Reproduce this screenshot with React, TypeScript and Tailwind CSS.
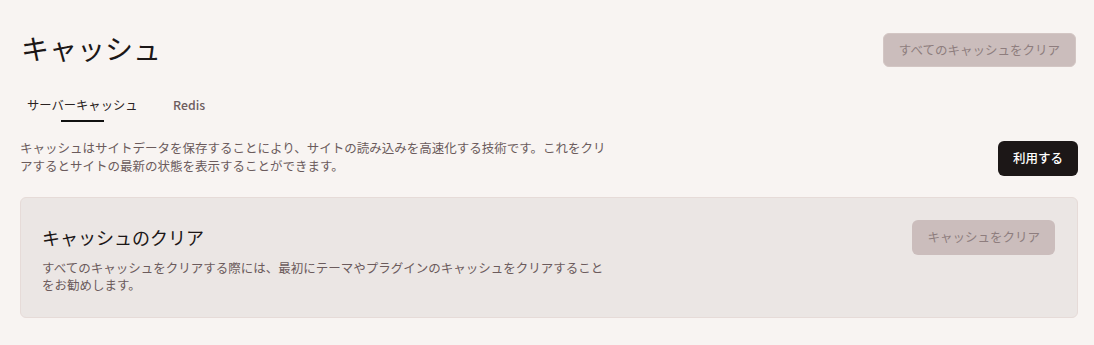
const font = { fontFamily: '"Noto Sans CJK JP", "Noto Sans", sans-serif' };

const TABS = ["サーバーキャッシュ", "Redis"];

export default function App() {
  const active = 0;
  return (
    <div
      className="w-[1094px] h-[345px] bg-[#f8f4f2] pl-5 pr-[16px] overflow-hidden"
      style={font}
    >
      {/* header */}
      <div className="flex items-start justify-between pt-[30px]">
        <h1 className="ml-[1px] text-[28px] leading-[36px] text-[#1c1717]">
          キャッシュ
        </h1>
        <button
          disabled
          className="mt-[3px] mr-[2px] h-[34px] px-[15px] rounded-md bg-[#cbbdbc] border border-[#d3c6c4] text-[12.5px] text-[#8e7d7e]"
        >
          すべてのキャッシュをクリア
        </button>
      </div>

      {/* tabs */}
      <div className="mt-[28px] flex gap-[30px] pl-[7px]">
        {TABS.map((t, i) => (
          <div key={t} className="flex flex-col items-center">
            <span
              className={`text-[12.3px] leading-[20px] ${
                i === active ? "text-[#2a2222]" : "text-[#6d5d5e] font-medium"
              }`}
            >
              {t}
            </span>
            <span
              className={`mt-[5px] h-[2px] w-[43px] ${
                i === active ? "bg-[#111]" : "bg-transparent"
              }`}
            />
          </div>
        ))}
      </div>

      {/* description */}
      <div className="mt-[17px] flex items-start justify-between">
        <p className="max-w-[595px] text-[12.5px] leading-[18px] text-[#6b5b5c]">
          キャッシュはサイトデータを保存することにより、サイトの読み込みを高速化する技術です。これをクリアするとサイトの最新の状態を表示することができます。
        </p>
        <button className="mt-[2px] h-[35px] px-[15px] rounded-md bg-[#1c1717] text-white text-[12.5px] font-medium">
          利用する
        </button>
      </div>

      {/* clear card */}
      <div className="mt-[21px] flex items-start justify-between rounded-md border border-[#e6dbd8] bg-[#ebe6e4] pt-[22px] pl-[21px] pr-[22px] pb-[24px]">
        <div>
          <h2 className="mt-[4px] text-[18px] leading-[26px] text-[#1c1717]">
            キャッシュのクリア
          </h2>
          <p className="mt-[9px] max-w-[570px] text-[12.5px] leading-[17px] text-[#6b5b5c]">
            すべてのキャッシュをクリアする際には、最初にテーマやプラグインのキャッシュをクリアすることをお勧めします。
          </p>
        </div>
        <button
          disabled
          className="h-[35px] px-[15px] rounded-md bg-[#cbbdbc] text-[12.5px] text-[#8e7d7e]"
        >
          キャッシュをクリア
        </button>
      </div>
    </div>
  );
}
